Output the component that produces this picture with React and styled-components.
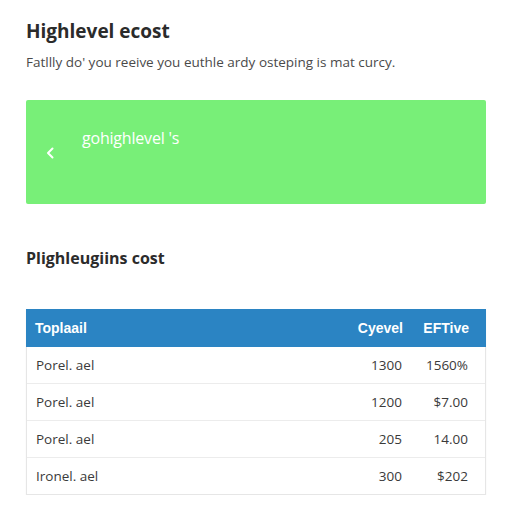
import React from 'react'
import styled, { createGlobalStyle } from 'styled-components'

const Global = createGlobalStyle`
  body {
    margin: 0;
    background: #fff;
    font-family: "Open Sans", "Noto Sans", sans-serif;
  }
`

const Page = styled.div`
  padding: 18px 26px 0 26px;
  width: 460px;
`

const Title = styled.h1`
  margin: 0;
  font-size: 19px;
  font-weight: 700;
  color: #2b2b2b;
  line-height: 26px;
`

const Lead = styled.p`
  margin: 8px 0 0 0;
  font-size: 13.5px;
  color: #4a4a4a;
  line-height: 20px;
`

const Banner = styled.div`
  margin-top: 28px;
  height: 104px;
  background: #78ef78;
  border-radius: 2px;
  display: flex;
  align-items: flex-start;
  padding: 27px 0 0 20px;
  box-sizing: border-box;
  color: #fff;
`

const Back = styled.span`
  margin-top: 20px;
  width: 36px;
  display: flex;
`

const BannerText = styled.span`
  font-size: 16px;
  line-height: 22px;
  letter-spacing: -0.2px;
`

const Heading = styled.h2`
  margin: 43px 0 0 0;
  font-size: 16px;
  font-weight: 700;
  color: #2b2b2b;
  line-height: 22px;
`

const Table = styled.div`
  margin-top: 40px;
  border: 1px solid #e6e6e6;
  border-top: none;
  box-shadow: 0 1px 2px rgba(0, 0, 0, 0.04);
`

const Row = styled.div`
  display: grid;
  grid-template-columns: 1fr 80px 66px;
  align-items: center;
  padding: 0 17px 0 9px;
  height: ${p => (p.$head ? '38px' : '36px')};
  background: ${p => (p.$head ? '#2b84c3' : '#fff')};
  color: ${p => (p.$head ? '#fff' : '#3a3a3a')};
  font-family: ${p => (p.$head ? '"Liberation Sans", Arial, sans-serif' : 'inherit')};
  font-weight: ${p => (p.$head ? 700 : 400)};
  font-size: ${p => (p.$head ? '14px' : '13.5px')};
  border-top: ${p => (p.$head ? 'none' : '1px solid #ececec')};
  margin: ${p => (p.$head ? '0 -1px' : '0')};
  &:nth-child(2) {
    border-top: none;
  }
`

const Cell = styled.span`
  text-align: ${p => (p.$right ? 'right' : 'left')};
`

const rows = [
  ['Porel. ael', '1300', '1560%'],
  ['Porel. ael', '1200', '$7.00'],
  ['Porel. ael', '205', '14.00'],
  ['Ironel. ael', '300', '$202'],
]

export default function App() {
  return (
    <>
      <Global />
      <Page>
        <Title>Highlevel ecost</Title>
        <Lead>Fatllly do' you reeive you euthle ardy osteping is mat curcy.</Lead>
        <Banner>
          <Back>
            <svg width="9" height="12" viewBox="0 0 9 12">
              <path d="M6.5 1.5 L2 6 L6.5 10.5" fill="none" stroke="#fff" strokeWidth="2" strokeLinecap="round" strokeLinejoin="round" />
            </svg>
          </Back>
          <BannerText>gohighlevel 's</BannerText>
        </Banner>
        <Heading>Plighleugiins cost</Heading>
        <Table>
          <Row $head>
            <Cell>Toplaail</Cell>
            <Cell $right>Cyevel</Cell>
            <Cell $right>EFTive</Cell>
          </Row>
          {rows.map((r, i) => (
            <Row key={i}>
              <Cell>{r[0]}</Cell>
              <Cell $right>{r[1]}</Cell>
              <Cell $right>{r[2]}</Cell>
            </Row>
          ))}
        </Table>
      </Page>
    </>
  )
}
